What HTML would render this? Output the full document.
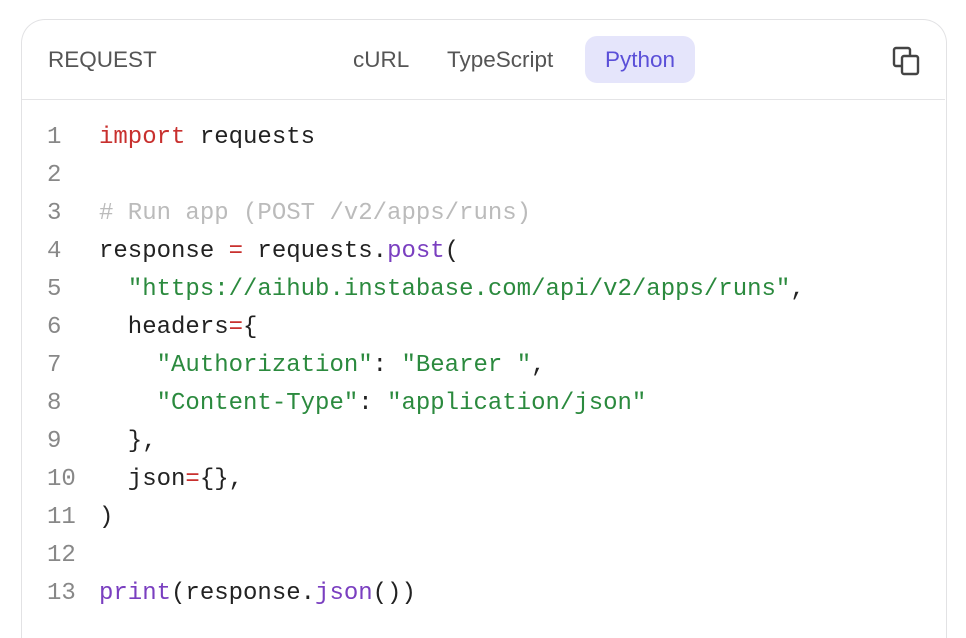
<!DOCTYPE html>
<html><head><style>
html,body{margin:0;width:966px;height:638px;overflow:hidden;}
body{background:#fff;font-family:"Liberation Sans",sans-serif;position:relative;}
.card{position:absolute;left:21px;top:19px;width:926px;height:619px;border:1.5px solid #e2e2e4;border-bottom:none;border-radius:24px 24px 0 0;background:#fff;box-sizing:border-box;}
.hdr{position:absolute;left:0;top:0;width:923px;height:79px;border-bottom:1.5px solid #e4e4e6;}
.t{position:absolute;top:0;line-height:80px;font-size:22.5px;color:#555;}
.pill{position:absolute;left:563px;top:16px;width:110px;height:47px;border-radius:12px;background:#e5e5fb;color:#5a4fd8;font-size:22.5px;line-height:47px;text-align:center;}
.code{position:absolute;left:21px;top:119px;font-family:"Liberation Mono",monospace;font-size:24px;}
.l{position:absolute;height:38px;line-height:38px;white-space:pre;color:#222;}
.n{position:absolute;left:26px;color:#888;width:40px;}
.c{position:absolute;left:78px;}
.k{color:#c8302e}.s{color:#2b8a3e}.f{color:#7a3fc0}.m{color:#bbb}
</style></head><body>
<div class="card">
<div class="hdr">
<div class="t" style="left:26px">REQUEST</div>
<div class="t" style="left:331px">cURL</div>
<div class="t" style="left:425px">TypeScript</div>
<div class="pill">Python</div>
<svg style="position:absolute;left:870px;top:26px" width="30" height="30" viewBox="0 0 30 30" fill="none" stroke="#444" stroke-width="2.4"><rect x="2" y="2" width="16" height="18" rx="2"/><rect x="10" y="10" width="16" height="18" rx="2" fill="#fff"/></svg>
</div>
</div>
<div class="code">
<div class="l" style="top:0"><span class="n">1</span><span class="c"><span class="k">import</span> requests</span></div>
<div class="l" style="top:38px"><span class="n">2</span></div>
<div class="l" style="top:76px"><span class="n">3</span><span class="c m"># Run app (POST /v2/apps/runs)</span></div>
<div class="l" style="top:114px"><span class="n">4</span><span class="c">response <span class="k">=</span> requests.<span class="f">post</span>(</span></div>
<div class="l" style="top:152px"><span class="n">5</span><span class="c">  <span class="s">"https://aihub.instabase.com/api/v2/apps/runs"</span>,</span></div>
<div class="l" style="top:190px"><span class="n">6</span><span class="c">  headers<span class="k">=</span>{</span></div>
<div class="l" style="top:228px"><span class="n">7</span><span class="c">    <span class="s">"Authorization"</span>: <span class="s">"Bearer "</span>,</span></div>
<div class="l" style="top:266px"><span class="n">8</span><span class="c">    <span class="s">"Content-Type"</span>: <span class="s">"application/json"</span></span></div>
<div class="l" style="top:304px"><span class="n">9</span><span class="c">  },</span></div>
<div class="l" style="top:342px"><span class="n">10</span><span class="c">  json<span class="k">=</span>{},</span></div>
<div class="l" style="top:380px"><span class="n">11</span><span class="c">)</span></div>
<div class="l" style="top:418px"><span class="n">12</span></div>
<div class="l" style="top:456px"><span class="n">13</span><span class="c"><span class="f">print</span>(response.<span class="f">json</span>())</span></div>
</div>
</body></html>
